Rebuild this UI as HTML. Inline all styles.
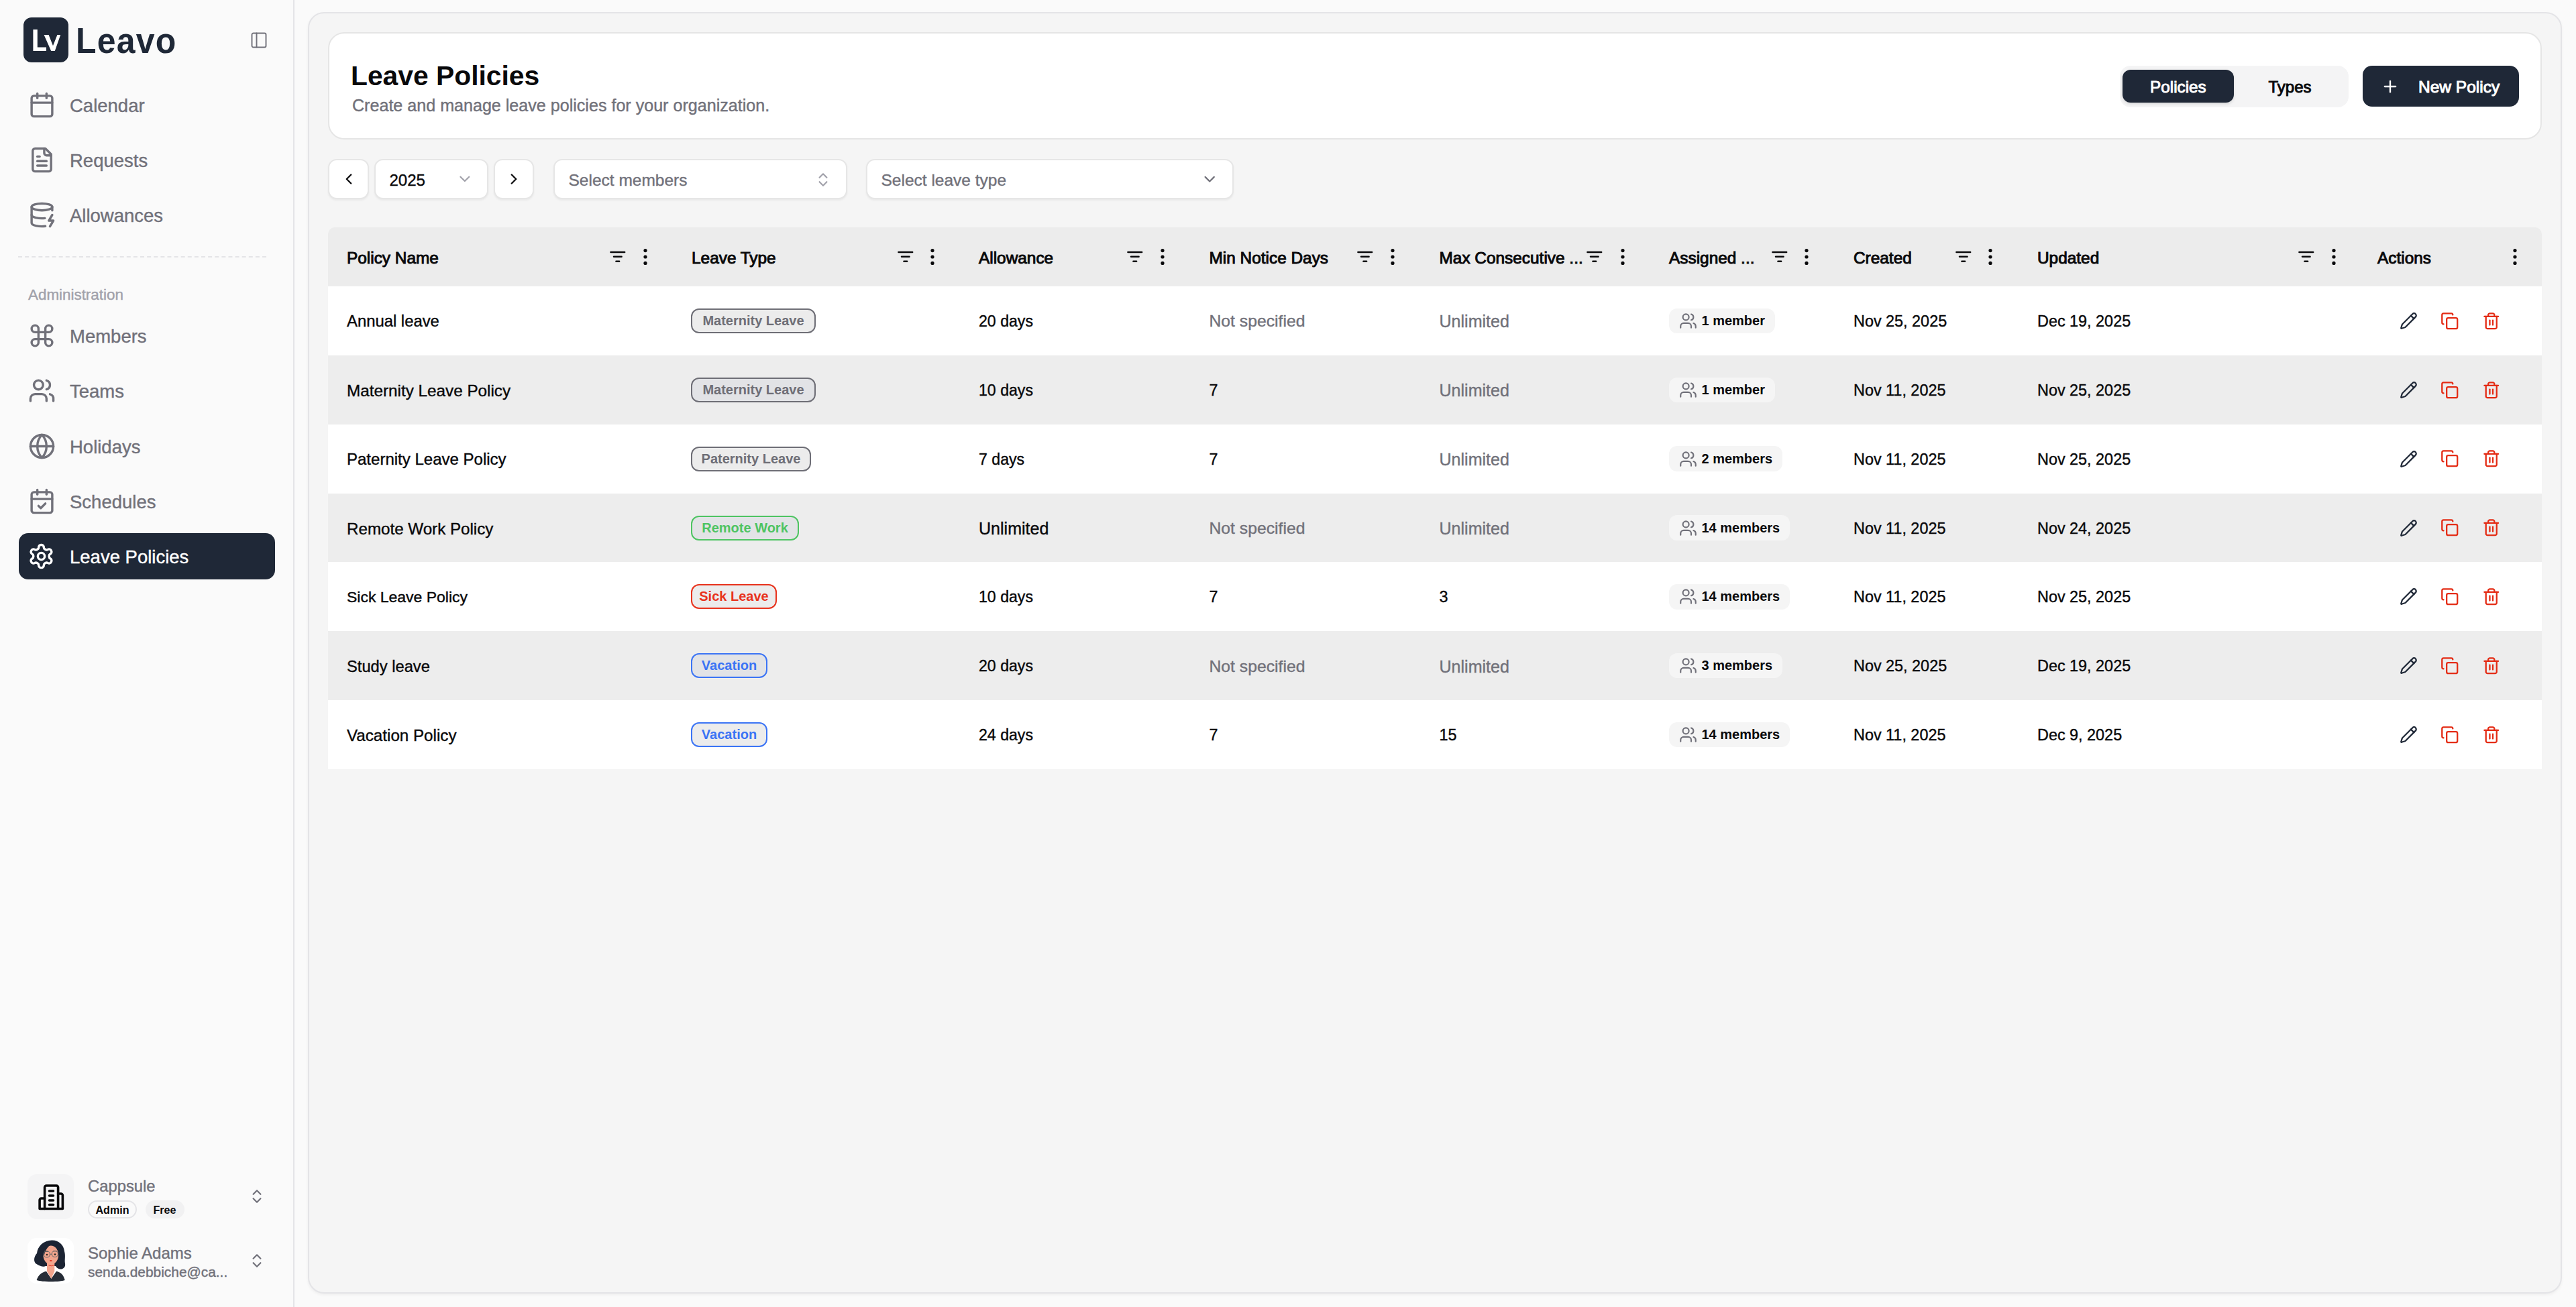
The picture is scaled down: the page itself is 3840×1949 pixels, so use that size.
<!DOCTYPE html>
<html><head><meta charset="utf-8"><title>Leave Policies</title>
<style>
html,body{margin:0;padding:0}
body{width:3840px;height:1949px;position:relative;overflow:hidden;background:#fafafa;font-family:"Liberation Sans",sans-serif}
.t{position:absolute;white-space:nowrap}
.i{position:absolute;overflow:visible}
.sidebar{position:absolute;left:0;top:0;width:437px;height:1949px;background:#fafafa;border-right:2px solid #e4e4e7}
.badge{position:absolute;height:37px;box-sizing:border-box;border:2px solid;border-radius:12px;font-size:20px;font-weight:700;line-height:33px;text-align:center;white-space:nowrap}
.pill{position:absolute;height:37.5px;box-sizing:border-box;padding:0 15px 0 15px;border-radius:12px;background:#f5f5f5;display:flex;align-items:center;white-space:nowrap}
.pill svg{flex:none;margin-right:6.5px}
.pill span{font-size:20px;font-weight:700;color:#09090b}
</style></head><body>
<div class="sidebar"></div>
<svg class="i" style="left:35px;top:26px" width="67" height="67" viewBox="0 0 67 67">
<rect x="0" y="0" width="67" height="67" rx="12" fill="#1f2837"/>
<path d="M14.4 18H20.8V44.6H34V50H14.4Z" fill="#fff"/>
<path d="M30.6 26H37.6L44 42.2L50.4 26H55.2L46.8 50H41.2Z" fill="#fff"/>
</svg>
<div class="t" style="left:113px;top:20.50px;font-size:50px;line-height:80px;color:#1f2837;font-weight:700;letter-spacing:1.2px;transform:scaleY(1.07);transform-origin:0 50%">Leavo</div>
<svg class="i" style="left:371.80px;top:45.70px" width="28" height="28" viewBox="0 0 24 24" fill="none" stroke="#71717a" stroke-width="1.65" stroke-linecap="round" stroke-linejoin="round"><rect width="18" height="18" x="3" y="3" rx="2"/><path d="M9 3v18"/></svg>
<svg class="i" style="left:41.50px;top:135.80px" width="41" height="41" viewBox="0 0 24 24" fill="none" stroke="#71717a" stroke-width="2" stroke-linecap="round" stroke-linejoin="round"><path d="M8 2v4"/><path d="M16 2v4"/><rect width="18" height="18" x="3" y="4" rx="2"/><path d="M3 10h18"/></svg>
<div class="t" style="left:104px;top:135.80px;font-size:27.5px;line-height:44px;color:#71717a;font-weight:400;-webkit-text-stroke:0.4px currentColor;">Calendar</div>
<svg class="i" style="left:41.50px;top:218.10px" width="41" height="41" viewBox="0 0 24 24" fill="none" stroke="#71717a" stroke-width="2" stroke-linecap="round" stroke-linejoin="round"><path d="M15 2H6a2 2 0 0 0-2 2v16a2 2 0 0 0 2 2h12a2 2 0 0 0 2-2V7Z"/><path d="M14 2v4a2 2 0 0 0 2 2h4"/><path d="M10 9H8"/><path d="M16 13H8"/><path d="M16 17H8"/></svg>
<div class="t" style="left:104px;top:218.10px;font-size:27.5px;line-height:44px;color:#71717a;font-weight:400;-webkit-text-stroke:0.4px currentColor;">Requests</div>
<svg class="i" style="left:41.50px;top:300.40px" width="41" height="41" viewBox="0 0 24 24" fill="none" stroke="#71717a" stroke-width="2" stroke-linecap="round" stroke-linejoin="round"><ellipse cx="12" cy="5" rx="9" ry="3"/><path d="M3 5V19A9 3 0 0 0 15 21.84"/><path d="M21 5V8"/><path d="M21 12L18 17H22L19 22"/><path d="M3 12A9 3 0 0 0 14.59 14.87"/></svg>
<div class="t" style="left:104px;top:300.40px;font-size:27.5px;line-height:44px;color:#71717a;font-weight:400;-webkit-text-stroke:0.4px currentColor;">Allowances</div>
<div style="position:absolute;left:27px;top:382px;width:370px;border-top:2px dashed #e4e4e7"></div>
<div class="t" style="left:42px;top:422.30px;font-size:22.4px;line-height:36px;color:#a1a1aa;font-weight:400;-webkit-text-stroke:0.4px currentColor;">Administration</div>
<svg class="i" style="left:41.50px;top:480.10px" width="41" height="41" viewBox="0 0 24 24" fill="none" stroke="#71717a" stroke-width="2" stroke-linecap="round" stroke-linejoin="round"><path d="M15 6v12a3 3 0 1 0 3-3H6a3 3 0 1 0 3 3V6a3 3 0 1 0-3 3h12a3 3 0 1 0-3-3"/></svg>
<div class="t" style="left:104px;top:480.10px;font-size:27.5px;line-height:44px;color:#71717a;font-weight:400;-webkit-text-stroke:0.4px currentColor;">Members</div>
<svg class="i" style="left:41.50px;top:562.40px" width="41" height="41" viewBox="0 0 24 24" fill="none" stroke="#71717a" stroke-width="2" stroke-linecap="round" stroke-linejoin="round"><path d="M16 21v-2a4 4 0 0 0-4-4H6a4 4 0 0 0-4 4v2"/><circle cx="9" cy="7" r="4"/><path d="M22 21v-2a4 4 0 0 0-3-3.87"/><path d="M16 3.13a4 4 0 0 1 0 7.75"/></svg>
<div class="t" style="left:104px;top:562.40px;font-size:27.5px;line-height:44px;color:#71717a;font-weight:400;-webkit-text-stroke:0.4px currentColor;">Teams</div>
<svg class="i" style="left:41.50px;top:644.70px" width="41" height="41" viewBox="0 0 24 24" fill="none" stroke="#71717a" stroke-width="2" stroke-linecap="round" stroke-linejoin="round"><circle cx="12" cy="12" r="10"/><path d="M12 2a14.5 14.5 0 0 0 0 20 14.5 14.5 0 0 0 0-20"/><path d="M2 12h20"/></svg>
<div class="t" style="left:104px;top:644.70px;font-size:27.5px;line-height:44px;color:#71717a;font-weight:400;-webkit-text-stroke:0.4px currentColor;">Holidays</div>
<svg class="i" style="left:41.50px;top:727.00px" width="41" height="41" viewBox="0 0 24 24" fill="none" stroke="#71717a" stroke-width="2" stroke-linecap="round" stroke-linejoin="round"><path d="M8 2v4"/><path d="M16 2v4"/><rect width="18" height="18" x="3" y="4" rx="2"/><path d="M3 10h18"/><path d="m9 16 2 2 4-4"/></svg>
<div class="t" style="left:104px;top:727.00px;font-size:27.5px;line-height:44px;color:#71717a;font-weight:400;-webkit-text-stroke:0.4px currentColor;">Schedules</div>
<div style="position:absolute;left:28px;top:795px;width:382px;height:69px;border-radius:14px;background:#1f2837"></div>
<svg class="i" style="left:41.20px;top:809.30px" width="41" height="41" viewBox="0 0 24 24" fill="none" stroke="#ffffff" stroke-width="2" stroke-linecap="round" stroke-linejoin="round"><path d="M12.22 2h-.44a2 2 0 0 0-2 2v.18a2 2 0 0 1-1 1.73l-.43.25a2 2 0 0 1-2 0l-.15-.08a2 2 0 0 0-2.73.73l-.22.38a2 2 0 0 0 .73 2.73l.15.1a2 2 0 0 1 1 1.72v.51a2 2 0 0 1-1 1.74l-.15.09a2 2 0 0 0-.73 2.730l.22.38a2 2 0 0 0 2.73.73l.15-.08a2 2 0 0 1 2 0l.43.25a2 2 0 0 1 1 1.73V20a2 2 0 0 0 2 2h.44a2 2 0 0 0 2-2v-.18a2 2 0 0 1 1-1.73l.43-.25a2 2 0 0 1 2 0l.15.08a2 2 0 0 0 2.73-.73l.22-.39a2 2 0 0 0-.73-2.73l-.15-.08a2 2 0 0 1-1-1.74v-.5a2 2 0 0 1 1-1.74l.15-.09a2 2 0 0 0 .73-2.73l-.22-.38a2 2 0 0 0-2.73-.73l-.15.08a2 2 0 0 1-2 0l-.43-.25a2 2 0 0 1-1-1.73V4a2 2 0 0 0-2-2z"/><circle cx="12" cy="12" r="3"/></svg>
<div class="t" style="left:104px;top:809.20px;font-size:27.5px;line-height:44px;color:#ffffff;font-weight:400;-webkit-text-stroke:0.4px currentColor;">Leave Policies</div>
<div style="position:absolute;left:41px;top:1751px;width:69px;height:67px;border-radius:14px;background:#f4f4f5"></div>
<svg class="i" style="left:56px;top:1765.5px" width="41" height="41" viewBox="0 0 41 41" fill="none" stroke="#09090b" stroke-width="3.6" stroke-linejoin="round" stroke-linecap="round">
<path d="M10.6 21H5.6a2.5 2.5 0 0 0-2.5 2.5V36.5H37.4V16.5a2.5 2.5 0 0 0-2.5-2.5H30.6"/>
<path d="M10.6 36.5V4.5a2.5 2.5 0 0 1 2.5-2.5h15a2.5 2.5 0 0 1 2.5 2.5V36.5"/>
<path d="M17.5 10h6M17.5 17h6M17.5 24h6M17.5 30.5h6"/>
</svg>
<div class="t" style="left:131px;top:1750.20px;font-size:23.8px;line-height:38px;color:#71717a;font-weight:400;-webkit-text-stroke:0.4px currentColor;">Cappsule</div>
<div style="position:absolute;left:131px;top:1790px;width:73px;height:26.5px;box-sizing:border-box;border:2px solid #e4e4e7;border-radius:14px;background:#fafafa"></div>
<div class="t" style="left:127.50px;width:80px;text-align:center;top:1791.20px;font-size:16.1px;line-height:26px;color:#09090b;font-weight:700;">Admin</div>
<div style="position:absolute;left:216.5px;top:1790px;width:58px;height:26.5px;border-radius:14px;background:#f1f1f2"></div>
<div class="t" style="left:215.50px;width:60px;text-align:center;top:1791.20px;font-size:16.1px;line-height:26px;color:#09090b;font-weight:700;">Free</div>
<svg class="i" style="left:369.50px;top:1771.30px" width="26" height="26" viewBox="0 0 24 24" fill="none" stroke="#71717a" stroke-width="2" stroke-linecap="round" stroke-linejoin="round"><path d="m7 15 5 5 5-5"/><path d="m7 9 5-5 5 5"/></svg>
<div style="position:absolute;left:41px;top:1846px;width:69px;height:67.5px;border-radius:14px;background:#ffffff"></div>
<svg class="i" style="left:41px;top:1846px" width="69" height="67.5" viewBox="0 0 69 67.5">
<path d="M12 38 C8 33 11 26 14 23 C15 12 24 4 36 3.5 C46 3 54 10 55 20 C57 27 55 33 56 38 C57 44 53 47 48 46.5 C45 46 43 44 42 42 L27 42 C24 44 18 42 12 38Z" fill="#1c2433"/>
<path d="M13.6 63 C16 55 22 51 28 49.8 L35.4 60.8 L43 49.8 C49 51 54 55 55.7 63 C48 66 22 66 13.6 63Z" fill="#262c36"/>
<path d="M29 37 h11.3 v12.8 l-4.9 11 l-6.4 -11z" fill="#f2a48c"/>
<ellipse cx="34.8" cy="25.5" rx="11.4" ry="14" fill="#f2a48c"/>
<path d="M22.5 24 C22 14 29 8.5 37 9 C32 11 27 16 24.5 27 Z" fill="#1c2433"/>
<path d="M45 12 C48 16 48 22 46.5 27 C46 20 44 15 40 11 Z" fill="#1c2433"/>
<circle cx="28.8" cy="24.4" r="4.6" fill="none" stroke="#6f6f6f" stroke-width="1.1"/>
<circle cx="40.9" cy="23.9" r="4.6" fill="none" stroke="#6f6f6f" stroke-width="1.1"/>
<path d="M33.4 24.2 h2.9" stroke="#6f6f6f" stroke-width="1.1"/>
<path d="M25 20 h6 M38 19.6 h6" stroke="#555" stroke-width="1.3"/>
<circle cx="29" cy="25" r="1.2" fill="#222"/><circle cx="41" cy="24.5" r="1.2" fill="#222"/>
<ellipse cx="34.8" cy="34" rx="2" ry="1.1" fill="#e0301e"/>
<path d="M31.5 40.6 Q35 42.8 39.8 40.6" stroke="#e0301e" stroke-width="1" fill="none"/>
</svg>
<div class="t" style="left:131px;top:1849.70px;font-size:24px;line-height:38px;color:#71717a;font-weight:400;-webkit-text-stroke:0.4px currentColor;">Sophie Adams</div>
<div class="t" style="left:131px;top:1879.90px;font-size:20.9px;line-height:33px;color:#71717a;font-weight:400;-webkit-text-stroke:0.4px currentColor;">senda.debbiche@ca...</div>
<svg class="i" style="left:369.50px;top:1867.30px" width="26" height="26" viewBox="0 0 24 24" fill="none" stroke="#71717a" stroke-width="2" stroke-linecap="round" stroke-linejoin="round"><path d="m7 15 5 5 5-5"/><path d="m7 9 5-5 5 5"/></svg>
<div style="position:absolute;left:459px;top:18px;width:3360px;height:1911px;box-sizing:border-box;border:2px solid #e4e4e7;border-radius:24px;background:#f5f5f5;box-shadow:0 2px 4px rgba(0,0,0,0.05)"></div>
<div style="position:absolute;left:489px;top:48px;width:3300px;height:160px;box-sizing:border-box;border:2px solid #e5e5e5;border-radius:24px;background:#fff"></div>
<div class="t" style="left:523px;top:80.80px;font-size:40.8px;line-height:65px;color:#09090b;font-weight:700;">Leave Policies</div>
<div class="t" style="left:525px;top:137.30px;font-size:25.1px;line-height:40px;color:#71717a;font-weight:400;-webkit-text-stroke:0.4px currentColor;">Create and manage leave policies for your organization.</div>
<div style="position:absolute;left:3159.5px;top:97.5px;width:341.5px;height:62px;border-radius:16px;background:#f4f4f5"></div>
<div style="position:absolute;left:3163.75px;top:103.75px;width:166.25px;height:49.5px;border-radius:12px;background:#1f2837;box-shadow:0 2px 4px rgba(0,0,0,0.12)"></div>
<div class="t" style="left:3146.90px;width:200px;text-align:center;top:110.25px;font-size:24.3px;line-height:39px;color:#fff;font-weight:400;-webkit-text-stroke:0.95px currentColor;">Policies</div>
<div class="t" style="left:3313.50px;width:200px;text-align:center;top:110.75px;font-size:24.0px;line-height:38px;color:#09090b;font-weight:400;-webkit-text-stroke:0.95px currentColor;">Types</div>
<div style="position:absolute;left:3522px;top:97.5px;width:232.5px;height:61.75px;border-radius:14px;background:#1f2837"></div>
<svg class="i" style="left:3549.10px;top:114.75px" width="28" height="28" viewBox="0 0 24 24" fill="none" stroke="#fff" stroke-width="2" stroke-linecap="round" stroke-linejoin="round"><path d="M5 12h14"/><path d="M12 5v14"/></svg>
<div class="t" style="left:3605px;top:110.25px;font-size:24.5px;line-height:39px;color:#fff;font-weight:400;-webkit-text-stroke:0.95px currentColor;">New Policy</div>
<div style="position:absolute;left:489.2px;top:236.9px;width:60.35px;height:60.30px;box-sizing:border-box;border:2px solid #e6e6e6;border-radius:13px;background:#fff;box-shadow:0 2px 3px rgba(0,0,0,0.05)"></div>
<svg class="i" style="left:506.60px;top:254.10px" width="26" height="26" viewBox="0 0 24 24" fill="none" stroke="#09090b" stroke-width="2.1" stroke-linecap="round" stroke-linejoin="round"><path d="m15 18-6-6 6-6"/></svg>
<div style="position:absolute;left:557.95px;top:236.9px;width:169.85px;height:60.30px;box-sizing:border-box;border:2px solid #e6e6e6;border-radius:13px;background:#fff;box-shadow:0 2px 3px rgba(0,0,0,0.05)"></div>
<div class="t" style="left:580.5px;top:249.50px;font-size:24px;line-height:38px;color:#09090b;font-weight:400;-webkit-text-stroke:0.4px currentColor;">2025</div>
<svg class="i" style="left:679.65px;top:254.15px" width="25.7" height="25.7" viewBox="0 0 24 24" fill="none" stroke="#a1a1aa" stroke-width="2" stroke-linecap="round" stroke-linejoin="round"><path d="m6 9 6 6 6-6"/></svg>
<div style="position:absolute;left:736.2px;top:236.9px;width:60.10px;height:60.30px;box-sizing:border-box;border:2px solid #e6e6e6;border-radius:13px;background:#fff;box-shadow:0 2px 3px rgba(0,0,0,0.05)"></div>
<svg class="i" style="left:753.30px;top:254.10px" width="26" height="26" viewBox="0 0 24 24" fill="none" stroke="#09090b" stroke-width="2.1" stroke-linecap="round" stroke-linejoin="round"><path d="m9 18 6-6-6-6"/></svg>
<div style="position:absolute;left:824.95px;top:236.9px;width:437.85px;height:60.30px;box-sizing:border-box;border:2px solid #e6e6e6;border-radius:13px;background:#fff;box-shadow:0 2px 3px rgba(0,0,0,0.05)"></div>
<div class="t" style="left:847.5px;top:249.00px;font-size:24.5px;line-height:39px;color:#71717a;font-weight:400;-webkit-text-stroke:0.4px currentColor;">Select members</div>
<svg class="i" style="left:1214.40px;top:254.50px" width="26" height="26" viewBox="0 0 24 24" fill="none" stroke="#a1a1aa" stroke-width="2" stroke-linecap="round" stroke-linejoin="round"><path d="m7 15 5 5 5-5"/><path d="m7 9 5-5 5 5"/></svg>
<div style="position:absolute;left:1290.7px;top:236.9px;width:548.10px;height:60.30px;box-sizing:border-box;border:2px solid #e6e6e6;border-radius:13px;background:#fff;box-shadow:0 2px 3px rgba(0,0,0,0.05)"></div>
<div class="t" style="left:1313.5px;top:249.00px;font-size:24.5px;line-height:39px;color:#71717a;font-weight:400;-webkit-text-stroke:0.4px currentColor;">Select leave type</div>
<svg class="i" style="left:1790.10px;top:254.30px" width="26.4" height="26.4" viewBox="0 0 24 24" fill="none" stroke="#71717a" stroke-width="2" stroke-linecap="round" stroke-linejoin="round"><path d="m6 9 6 6 6-6"/></svg>
<div style="position:absolute;left:489px;top:339.25px;width:3300px;height:87.75px;border-radius:10px 10px 0 0;background:#ececec"></div>
<div class="t" style="left:517px;top:364.62px;font-size:24.4px;line-height:39px;color:#09090b;font-weight:400;-webkit-text-stroke:0.95px currentColor;">Policy Name</div>
<svg class="i" style="left:906.70px;top:368.52px" width="27.6" height="27.6" viewBox="0 0 24 24" fill="none" stroke="#09090b" stroke-width="2.2" stroke-linecap="round" stroke-linejoin="round"><path d="M3 6h18"/><path d="M7 12h10"/><path d="M10 18h4"/></svg>
<svg class="i" style="left:957.7px;top:369.125px" width="8" height="28" viewBox="0 0 8 28"><circle cx="4" cy="4.6" r="2.6" fill="#09090b"/><circle cx="4" cy="14" r="2.6" fill="#09090b"/><circle cx="4" cy="23.4" r="2.6" fill="#09090b"/></svg>
<div class="t" style="left:1031px;top:364.62px;font-size:24.4px;line-height:39px;color:#09090b;font-weight:400;-webkit-text-stroke:0.95px currentColor;">Leave Type</div>
<svg class="i" style="left:1335.70px;top:368.52px" width="27.6" height="27.6" viewBox="0 0 24 24" fill="none" stroke="#09090b" stroke-width="2.2" stroke-linecap="round" stroke-linejoin="round"><path d="M3 6h18"/><path d="M7 12h10"/><path d="M10 18h4"/></svg>
<svg class="i" style="left:1386.2px;top:369.125px" width="8" height="28" viewBox="0 0 8 28"><circle cx="4" cy="4.6" r="2.6" fill="#09090b"/><circle cx="4" cy="14" r="2.6" fill="#09090b"/><circle cx="4" cy="23.4" r="2.6" fill="#09090b"/></svg>
<div class="t" style="left:1459px;top:364.62px;font-size:24.4px;line-height:39px;color:#09090b;font-weight:400;-webkit-text-stroke:0.95px currentColor;">Allowance</div>
<svg class="i" style="left:1677.70px;top:368.52px" width="27.6" height="27.6" viewBox="0 0 24 24" fill="none" stroke="#09090b" stroke-width="2.2" stroke-linecap="round" stroke-linejoin="round"><path d="M3 6h18"/><path d="M7 12h10"/><path d="M10 18h4"/></svg>
<svg class="i" style="left:1729px;top:369.125px" width="8" height="28" viewBox="0 0 8 28"><circle cx="4" cy="4.6" r="2.6" fill="#09090b"/><circle cx="4" cy="14" r="2.6" fill="#09090b"/><circle cx="4" cy="23.4" r="2.6" fill="#09090b"/></svg>
<div class="t" style="left:1802.5px;top:364.62px;font-size:24.4px;line-height:39px;color:#09090b;font-weight:400;-webkit-text-stroke:0.95px currentColor;">Min Notice Days</div>
<svg class="i" style="left:2020.70px;top:368.52px" width="27.6" height="27.6" viewBox="0 0 24 24" fill="none" stroke="#09090b" stroke-width="2.2" stroke-linecap="round" stroke-linejoin="round"><path d="M3 6h18"/><path d="M7 12h10"/><path d="M10 18h4"/></svg>
<svg class="i" style="left:2072.2px;top:369.125px" width="8" height="28" viewBox="0 0 8 28"><circle cx="4" cy="4.6" r="2.6" fill="#09090b"/><circle cx="4" cy="14" r="2.6" fill="#09090b"/><circle cx="4" cy="23.4" r="2.6" fill="#09090b"/></svg>
<div class="t" style="left:2145.5px;top:364.62px;font-size:24.4px;line-height:39px;color:#09090b;font-weight:400;-webkit-text-stroke:0.95px currentColor;">Max Consecutive ...</div>
<svg class="i" style="left:2363.20px;top:368.52px" width="27.6" height="27.6" viewBox="0 0 24 24" fill="none" stroke="#09090b" stroke-width="2.2" stroke-linecap="round" stroke-linejoin="round"><path d="M3 6h18"/><path d="M7 12h10"/><path d="M10 18h4"/></svg>
<svg class="i" style="left:2414.9px;top:369.125px" width="8" height="28" viewBox="0 0 8 28"><circle cx="4" cy="4.6" r="2.6" fill="#09090b"/><circle cx="4" cy="14" r="2.6" fill="#09090b"/><circle cx="4" cy="23.4" r="2.6" fill="#09090b"/></svg>
<div class="t" style="left:2488px;top:364.62px;font-size:24.4px;line-height:39px;color:#09090b;font-weight:400;-webkit-text-stroke:0.95px currentColor;">Assigned ...</div>
<svg class="i" style="left:2638.70px;top:368.52px" width="27.6" height="27.6" viewBox="0 0 24 24" fill="none" stroke="#09090b" stroke-width="2.2" stroke-linecap="round" stroke-linejoin="round"><path d="M3 6h18"/><path d="M7 12h10"/><path d="M10 18h4"/></svg>
<svg class="i" style="left:2688.8px;top:369.125px" width="8" height="28" viewBox="0 0 8 28"><circle cx="4" cy="4.6" r="2.6" fill="#09090b"/><circle cx="4" cy="14" r="2.6" fill="#09090b"/><circle cx="4" cy="23.4" r="2.6" fill="#09090b"/></svg>
<div class="t" style="left:2763px;top:364.62px;font-size:24.4px;line-height:39px;color:#09090b;font-weight:400;-webkit-text-stroke:0.95px currentColor;">Created</div>
<svg class="i" style="left:2912.70px;top:368.52px" width="27.6" height="27.6" viewBox="0 0 24 24" fill="none" stroke="#09090b" stroke-width="2.2" stroke-linecap="round" stroke-linejoin="round"><path d="M3 6h18"/><path d="M7 12h10"/><path d="M10 18h4"/></svg>
<svg class="i" style="left:2963px;top:369.125px" width="8" height="28" viewBox="0 0 8 28"><circle cx="4" cy="4.6" r="2.6" fill="#09090b"/><circle cx="4" cy="14" r="2.6" fill="#09090b"/><circle cx="4" cy="23.4" r="2.6" fill="#09090b"/></svg>
<div class="t" style="left:3037px;top:364.62px;font-size:24.4px;line-height:39px;color:#09090b;font-weight:400;-webkit-text-stroke:0.95px currentColor;">Updated</div>
<svg class="i" style="left:3423.70px;top:368.52px" width="27.6" height="27.6" viewBox="0 0 24 24" fill="none" stroke="#09090b" stroke-width="2.2" stroke-linecap="round" stroke-linejoin="round"><path d="M3 6h18"/><path d="M7 12h10"/><path d="M10 18h4"/></svg>
<svg class="i" style="left:3474.9px;top:369.125px" width="8" height="28" viewBox="0 0 8 28"><circle cx="4" cy="4.6" r="2.6" fill="#09090b"/><circle cx="4" cy="14" r="2.6" fill="#09090b"/><circle cx="4" cy="23.4" r="2.6" fill="#09090b"/></svg>
<div class="t" style="left:3544px;top:364.62px;font-size:24.4px;line-height:39px;color:#09090b;font-weight:400;-webkit-text-stroke:0.95px currentColor;">Actions</div>
<svg class="i" style="left:3745px;top:369.125px" width="8" height="28" viewBox="0 0 8 28"><circle cx="4" cy="4.6" r="2.6" fill="#09090b"/><circle cx="4" cy="14" r="2.6" fill="#09090b"/><circle cx="4" cy="23.4" r="2.6" fill="#09090b"/></svg>
<div style="position:absolute;left:489px;top:427.00px;width:3300px;height:103.16px;background:#ffffff"></div>
<div class="t" style="left:517px;top:460.43px;font-size:23.85px;line-height:38px;color:#09090b;font-weight:400;-webkit-text-stroke:0.4px currentColor;">Annual leave</div>
<div class="badge" style="left:1030px;top:459.93px;width:186px;border-color:#6e6e76;color:#6e6e76;background:#ececec">Maternity Leave</div>
<div class="t" style="left:1459px;top:460.93px;font-size:23.13px;line-height:37px;color:#09090b;font-weight:400;-webkit-text-stroke:0.4px currentColor;">20 days</div>
<div class="t" style="left:1802.5px;top:459.43px;font-size:24.74px;line-height:40px;color:#71717a;font-weight:400;-webkit-text-stroke:0.4px currentColor;">Not specified</div>
<div class="t" style="left:2145.5px;top:459.43px;font-size:25.07px;line-height:40px;color:#71717a;font-weight:400;-webkit-text-stroke:0.4px currentColor;">Unlimited</div>
<div class="pill" style="left:2488px;top:459.68px"><svg width="27" height="27" viewBox="0 0 24 24" fill="none" stroke="#71717a" stroke-width="1.9" stroke-linecap="round" stroke-linejoin="round"><path d="M16 21v-2a4 4 0 0 0-4-4H6a4 4 0 0 0-4 4v2"/><circle cx="9" cy="7" r="4"/><path d="M22 21v-2a4 4 0 0 0-3-3.87"/><path d="M16 3.13a4 4 0 0 1 0 7.75"/></svg><span>1 member</span></div>
<div class="t" style="left:2763px;top:460.93px;font-size:23.4px;line-height:37px;color:#09090b;font-weight:400;-webkit-text-stroke:0.4px currentColor;">Nov 25, 2025</div>
<div class="t" style="left:3037px;top:460.93px;font-size:23.4px;line-height:37px;color:#09090b;font-weight:400;-webkit-text-stroke:0.4px currentColor;">Dec 19, 2025</div>
<svg class="i" style="left:3577.00px;top:464.93px" width="27" height="27" viewBox="0 0 24 24" fill="none" stroke="#1f2837" stroke-width="2" stroke-linecap="round" stroke-linejoin="round"><path d="M21.174 6.812a1 1 0 0 0-3.986-3.987L3.842 16.174a2 2 0 0 0-.5.83l-1.321 4.352a.5.5 0 0 0 .623.622l4.353-1.32a2 2 0 0 0 .83-.497z"/><path d="m15 5 4 4"/></svg>
<svg class="i" style="left:3638.45px;top:464.68px" width="27.5" height="27.5" viewBox="0 0 24 24" fill="none" stroke="#e42b14" stroke-width="2" stroke-linecap="round" stroke-linejoin="round"><rect width="14" height="14" x="8" y="8" rx="2" ry="2"/><path d="M4 16c-1.1 0-2-.9-2-2V4c0-1.1.9-2 2-2h10c1.1 0 2 .9 2 2"/></svg>
<svg class="i" style="left:3700.25px;top:464.68px" width="27.5" height="27.5" viewBox="0 0 24 24" fill="none" stroke="#e42b14" stroke-width="2" stroke-linecap="round" stroke-linejoin="round"><path d="M3 6h18"/><path d="M19 6v14c0 1-1 2-2 2H7c-1 0-2-1-2-2V6"/><path d="M8 6V4c0-1 1-2 2-2h4c1 0 2 1 2 2v2"/><line x1="10" x2="10" y1="11" y2="17"/><line x1="14" x2="14" y1="11" y2="17"/></svg>
<div style="position:absolute;left:489px;top:529.86px;width:3300px;height:103.16px;background:#ededed"></div>
<div class="t" style="left:517px;top:562.79px;font-size:24.28px;line-height:39px;color:#09090b;font-weight:400;-webkit-text-stroke:0.4px currentColor;">Maternity Leave Policy</div>
<div class="badge" style="left:1030px;top:562.79px;width:186px;border-color:#6e6e76;color:#6e6e76;background:#e2e3e6">Maternity Leave</div>
<div class="t" style="left:1459px;top:563.79px;font-size:23.13px;line-height:37px;color:#09090b;font-weight:400;-webkit-text-stroke:0.4px currentColor;">10 days</div>
<div class="t" style="left:1802.5px;top:563.79px;font-size:23.4px;line-height:37px;color:#09090b;font-weight:400;-webkit-text-stroke:0.4px currentColor;">7</div>
<div class="t" style="left:2145.5px;top:562.29px;font-size:25.07px;line-height:40px;color:#71717a;font-weight:400;-webkit-text-stroke:0.4px currentColor;">Unlimited</div>
<div class="pill" style="left:2488px;top:562.54px"><svg width="27" height="27" viewBox="0 0 24 24" fill="none" stroke="#71717a" stroke-width="1.9" stroke-linecap="round" stroke-linejoin="round"><path d="M16 21v-2a4 4 0 0 0-4-4H6a4 4 0 0 0-4 4v2"/><circle cx="9" cy="7" r="4"/><path d="M22 21v-2a4 4 0 0 0-3-3.87"/><path d="M16 3.13a4 4 0 0 1 0 7.75"/></svg><span>1 member</span></div>
<div class="t" style="left:2763px;top:563.79px;font-size:23.4px;line-height:37px;color:#09090b;font-weight:400;-webkit-text-stroke:0.4px currentColor;">Nov 11, 2025</div>
<div class="t" style="left:3037px;top:563.79px;font-size:23.4px;line-height:37px;color:#09090b;font-weight:400;-webkit-text-stroke:0.4px currentColor;">Nov 25, 2025</div>
<svg class="i" style="left:3577.00px;top:567.79px" width="27" height="27" viewBox="0 0 24 24" fill="none" stroke="#1f2837" stroke-width="2" stroke-linecap="round" stroke-linejoin="round"><path d="M21.174 6.812a1 1 0 0 0-3.986-3.987L3.842 16.174a2 2 0 0 0-.5.83l-1.321 4.352a.5.5 0 0 0 .623.622l4.353-1.32a2 2 0 0 0 .83-.497z"/><path d="m15 5 4 4"/></svg>
<svg class="i" style="left:3638.45px;top:567.54px" width="27.5" height="27.5" viewBox="0 0 24 24" fill="none" stroke="#e42b14" stroke-width="2" stroke-linecap="round" stroke-linejoin="round"><rect width="14" height="14" x="8" y="8" rx="2" ry="2"/><path d="M4 16c-1.1 0-2-.9-2-2V4c0-1.1.9-2 2-2h10c1.1 0 2 .9 2 2"/></svg>
<svg class="i" style="left:3700.25px;top:567.54px" width="27.5" height="27.5" viewBox="0 0 24 24" fill="none" stroke="#e42b14" stroke-width="2" stroke-linecap="round" stroke-linejoin="round"><path d="M3 6h18"/><path d="M19 6v14c0 1-1 2-2 2H7c-1 0-2-1-2-2V6"/><path d="M8 6V4c0-1 1-2 2-2h4c1 0 2 1 2 2v2"/><line x1="10" x2="10" y1="11" y2="17"/><line x1="14" x2="14" y1="11" y2="17"/></svg>
<div style="position:absolute;left:489px;top:632.71px;width:3300px;height:103.16px;background:#ffffff"></div>
<div class="t" style="left:517px;top:666.14px;font-size:24.03px;line-height:38px;color:#09090b;font-weight:400;-webkit-text-stroke:0.4px currentColor;">Paternity Leave Policy</div>
<div class="badge" style="left:1030px;top:665.64px;width:179px;border-color:#6e6e76;color:#6e6e76;background:#ececec">Paternity Leave</div>
<div class="t" style="left:1459px;top:666.64px;font-size:23.13px;line-height:37px;color:#09090b;font-weight:400;-webkit-text-stroke:0.4px currentColor;">7 days</div>
<div class="t" style="left:1802.5px;top:666.64px;font-size:23.4px;line-height:37px;color:#09090b;font-weight:400;-webkit-text-stroke:0.4px currentColor;">7</div>
<div class="t" style="left:2145.5px;top:665.14px;font-size:25.07px;line-height:40px;color:#71717a;font-weight:400;-webkit-text-stroke:0.4px currentColor;">Unlimited</div>
<div class="pill" style="left:2488px;top:665.39px"><svg width="27" height="27" viewBox="0 0 24 24" fill="none" stroke="#71717a" stroke-width="1.9" stroke-linecap="round" stroke-linejoin="round"><path d="M16 21v-2a4 4 0 0 0-4-4H6a4 4 0 0 0-4 4v2"/><circle cx="9" cy="7" r="4"/><path d="M22 21v-2a4 4 0 0 0-3-3.87"/><path d="M16 3.13a4 4 0 0 1 0 7.75"/></svg><span>2 members</span></div>
<div class="t" style="left:2763px;top:666.64px;font-size:23.4px;line-height:37px;color:#09090b;font-weight:400;-webkit-text-stroke:0.4px currentColor;">Nov 11, 2025</div>
<div class="t" style="left:3037px;top:666.64px;font-size:23.4px;line-height:37px;color:#09090b;font-weight:400;-webkit-text-stroke:0.4px currentColor;">Nov 25, 2025</div>
<svg class="i" style="left:3577.00px;top:670.64px" width="27" height="27" viewBox="0 0 24 24" fill="none" stroke="#1f2837" stroke-width="2" stroke-linecap="round" stroke-linejoin="round"><path d="M21.174 6.812a1 1 0 0 0-3.986-3.987L3.842 16.174a2 2 0 0 0-.5.83l-1.321 4.352a.5.5 0 0 0 .623.622l4.353-1.32a2 2 0 0 0 .83-.497z"/><path d="m15 5 4 4"/></svg>
<svg class="i" style="left:3638.45px;top:670.39px" width="27.5" height="27.5" viewBox="0 0 24 24" fill="none" stroke="#e42b14" stroke-width="2" stroke-linecap="round" stroke-linejoin="round"><rect width="14" height="14" x="8" y="8" rx="2" ry="2"/><path d="M4 16c-1.1 0-2-.9-2-2V4c0-1.1.9-2 2-2h10c1.1 0 2 .9 2 2"/></svg>
<svg class="i" style="left:3700.25px;top:670.39px" width="27.5" height="27.5" viewBox="0 0 24 24" fill="none" stroke="#e42b14" stroke-width="2" stroke-linecap="round" stroke-linejoin="round"><path d="M3 6h18"/><path d="M19 6v14c0 1-1 2-2 2H7c-1 0-2-1-2-2V6"/><path d="M8 6V4c0-1 1-2 2-2h4c1 0 2 1 2 2v2"/><line x1="10" x2="10" y1="11" y2="17"/><line x1="14" x2="14" y1="11" y2="17"/></svg>
<div style="position:absolute;left:489px;top:735.57px;width:3300px;height:103.16px;background:#ededed"></div>
<div class="t" style="left:517px;top:768.50px;font-size:24.17px;line-height:39px;color:#09090b;font-weight:400;-webkit-text-stroke:0.4px currentColor;">Remote Work Policy</div>
<div class="badge" style="left:1030px;top:768.50px;width:161px;border-color:#4ec462;color:#4ec462;background:#e2e3e6">Remote Work</div>
<div class="t" style="left:1459px;top:768.00px;font-size:25.07px;line-height:40px;color:#09090b;font-weight:400;-webkit-text-stroke:0.4px currentColor;">Unlimited</div>
<div class="t" style="left:1802.5px;top:768.00px;font-size:24.74px;line-height:40px;color:#71717a;font-weight:400;-webkit-text-stroke:0.4px currentColor;">Not specified</div>
<div class="t" style="left:2145.5px;top:768.00px;font-size:25.07px;line-height:40px;color:#71717a;font-weight:400;-webkit-text-stroke:0.4px currentColor;">Unlimited</div>
<div class="pill" style="left:2488px;top:768.25px"><svg width="27" height="27" viewBox="0 0 24 24" fill="none" stroke="#71717a" stroke-width="1.9" stroke-linecap="round" stroke-linejoin="round"><path d="M16 21v-2a4 4 0 0 0-4-4H6a4 4 0 0 0-4 4v2"/><circle cx="9" cy="7" r="4"/><path d="M22 21v-2a4 4 0 0 0-3-3.87"/><path d="M16 3.13a4 4 0 0 1 0 7.75"/></svg><span>14 members</span></div>
<div class="t" style="left:2763px;top:769.50px;font-size:23.4px;line-height:37px;color:#09090b;font-weight:400;-webkit-text-stroke:0.4px currentColor;">Nov 11, 2025</div>
<div class="t" style="left:3037px;top:769.50px;font-size:23.4px;line-height:37px;color:#09090b;font-weight:400;-webkit-text-stroke:0.4px currentColor;">Nov 24, 2025</div>
<svg class="i" style="left:3577.00px;top:773.50px" width="27" height="27" viewBox="0 0 24 24" fill="none" stroke="#1f2837" stroke-width="2" stroke-linecap="round" stroke-linejoin="round"><path d="M21.174 6.812a1 1 0 0 0-3.986-3.987L3.842 16.174a2 2 0 0 0-.5.83l-1.321 4.352a.5.5 0 0 0 .623.622l4.353-1.32a2 2 0 0 0 .83-.497z"/><path d="m15 5 4 4"/></svg>
<svg class="i" style="left:3638.45px;top:773.25px" width="27.5" height="27.5" viewBox="0 0 24 24" fill="none" stroke="#e42b14" stroke-width="2" stroke-linecap="round" stroke-linejoin="round"><rect width="14" height="14" x="8" y="8" rx="2" ry="2"/><path d="M4 16c-1.1 0-2-.9-2-2V4c0-1.1.9-2 2-2h10c1.1 0 2 .9 2 2"/></svg>
<svg class="i" style="left:3700.25px;top:773.25px" width="27.5" height="27.5" viewBox="0 0 24 24" fill="none" stroke="#e42b14" stroke-width="2" stroke-linecap="round" stroke-linejoin="round"><path d="M3 6h18"/><path d="M19 6v14c0 1-1 2-2 2H7c-1 0-2-1-2-2V6"/><path d="M8 6V4c0-1 1-2 2-2h4c1 0 2 1 2 2v2"/><line x1="10" x2="10" y1="11" y2="17"/><line x1="14" x2="14" y1="11" y2="17"/></svg>
<div style="position:absolute;left:489px;top:838.43px;width:3300px;height:103.16px;background:#ffffff"></div>
<div class="t" style="left:517px;top:872.36px;font-size:22.97px;line-height:37px;color:#09090b;font-weight:400;-webkit-text-stroke:0.4px currentColor;">Sick Leave Policy</div>
<div class="badge" style="left:1030px;top:871.36px;width:128px;border-color:#e8321c;color:#e8321c;background:#ececec">Sick Leave</div>
<div class="t" style="left:1459px;top:872.36px;font-size:23.13px;line-height:37px;color:#09090b;font-weight:400;-webkit-text-stroke:0.4px currentColor;">10 days</div>
<div class="t" style="left:1802.5px;top:872.36px;font-size:23.4px;line-height:37px;color:#09090b;font-weight:400;-webkit-text-stroke:0.4px currentColor;">7</div>
<div class="t" style="left:2145.5px;top:872.36px;font-size:23.4px;line-height:37px;color:#09090b;font-weight:400;-webkit-text-stroke:0.4px currentColor;">3</div>
<div class="pill" style="left:2488px;top:871.11px"><svg width="27" height="27" viewBox="0 0 24 24" fill="none" stroke="#71717a" stroke-width="1.9" stroke-linecap="round" stroke-linejoin="round"><path d="M16 21v-2a4 4 0 0 0-4-4H6a4 4 0 0 0-4 4v2"/><circle cx="9" cy="7" r="4"/><path d="M22 21v-2a4 4 0 0 0-3-3.87"/><path d="M16 3.13a4 4 0 0 1 0 7.75"/></svg><span>14 members</span></div>
<div class="t" style="left:2763px;top:872.36px;font-size:23.4px;line-height:37px;color:#09090b;font-weight:400;-webkit-text-stroke:0.4px currentColor;">Nov 11, 2025</div>
<div class="t" style="left:3037px;top:872.36px;font-size:23.4px;line-height:37px;color:#09090b;font-weight:400;-webkit-text-stroke:0.4px currentColor;">Nov 25, 2025</div>
<svg class="i" style="left:3577.00px;top:876.36px" width="27" height="27" viewBox="0 0 24 24" fill="none" stroke="#1f2837" stroke-width="2" stroke-linecap="round" stroke-linejoin="round"><path d="M21.174 6.812a1 1 0 0 0-3.986-3.987L3.842 16.174a2 2 0 0 0-.5.83l-1.321 4.352a.5.5 0 0 0 .623.622l4.353-1.32a2 2 0 0 0 .83-.497z"/><path d="m15 5 4 4"/></svg>
<svg class="i" style="left:3638.45px;top:876.11px" width="27.5" height="27.5" viewBox="0 0 24 24" fill="none" stroke="#e42b14" stroke-width="2" stroke-linecap="round" stroke-linejoin="round"><rect width="14" height="14" x="8" y="8" rx="2" ry="2"/><path d="M4 16c-1.1 0-2-.9-2-2V4c0-1.1.9-2 2-2h10c1.1 0 2 .9 2 2"/></svg>
<svg class="i" style="left:3700.25px;top:876.11px" width="27.5" height="27.5" viewBox="0 0 24 24" fill="none" stroke="#e42b14" stroke-width="2" stroke-linecap="round" stroke-linejoin="round"><path d="M3 6h18"/><path d="M19 6v14c0 1-1 2-2 2H7c-1 0-2-1-2-2V6"/><path d="M8 6V4c0-1 1-2 2-2h4c1 0 2 1 2 2v2"/><line x1="10" x2="10" y1="11" y2="17"/><line x1="14" x2="14" y1="11" y2="17"/></svg>
<div style="position:absolute;left:489px;top:941.28px;width:3300px;height:103.16px;background:#ededed"></div>
<div class="t" style="left:517px;top:974.71px;font-size:23.71px;line-height:38px;color:#09090b;font-weight:400;-webkit-text-stroke:0.4px currentColor;">Study leave</div>
<div class="badge" style="left:1030px;top:974.21px;width:114px;border-color:#3b74f5;color:#3b74f5;background:#e2e3e6">Vacation</div>
<div class="t" style="left:1459px;top:975.21px;font-size:23.13px;line-height:37px;color:#09090b;font-weight:400;-webkit-text-stroke:0.4px currentColor;">20 days</div>
<div class="t" style="left:1802.5px;top:973.71px;font-size:24.74px;line-height:40px;color:#71717a;font-weight:400;-webkit-text-stroke:0.4px currentColor;">Not specified</div>
<div class="t" style="left:2145.5px;top:973.71px;font-size:25.07px;line-height:40px;color:#71717a;font-weight:400;-webkit-text-stroke:0.4px currentColor;">Unlimited</div>
<div class="pill" style="left:2488px;top:973.96px"><svg width="27" height="27" viewBox="0 0 24 24" fill="none" stroke="#71717a" stroke-width="1.9" stroke-linecap="round" stroke-linejoin="round"><path d="M16 21v-2a4 4 0 0 0-4-4H6a4 4 0 0 0-4 4v2"/><circle cx="9" cy="7" r="4"/><path d="M22 21v-2a4 4 0 0 0-3-3.87"/><path d="M16 3.13a4 4 0 0 1 0 7.75"/></svg><span>3 members</span></div>
<div class="t" style="left:2763px;top:975.21px;font-size:23.4px;line-height:37px;color:#09090b;font-weight:400;-webkit-text-stroke:0.4px currentColor;">Nov 25, 2025</div>
<div class="t" style="left:3037px;top:975.21px;font-size:23.4px;line-height:37px;color:#09090b;font-weight:400;-webkit-text-stroke:0.4px currentColor;">Dec 19, 2025</div>
<svg class="i" style="left:3577.00px;top:979.21px" width="27" height="27" viewBox="0 0 24 24" fill="none" stroke="#1f2837" stroke-width="2" stroke-linecap="round" stroke-linejoin="round"><path d="M21.174 6.812a1 1 0 0 0-3.986-3.987L3.842 16.174a2 2 0 0 0-.5.83l-1.321 4.352a.5.5 0 0 0 .623.622l4.353-1.32a2 2 0 0 0 .83-.497z"/><path d="m15 5 4 4"/></svg>
<svg class="i" style="left:3638.45px;top:978.96px" width="27.5" height="27.5" viewBox="0 0 24 24" fill="none" stroke="#e42b14" stroke-width="2" stroke-linecap="round" stroke-linejoin="round"><rect width="14" height="14" x="8" y="8" rx="2" ry="2"/><path d="M4 16c-1.1 0-2-.9-2-2V4c0-1.1.9-2 2-2h10c1.1 0 2 .9 2 2"/></svg>
<svg class="i" style="left:3700.25px;top:978.96px" width="27.5" height="27.5" viewBox="0 0 24 24" fill="none" stroke="#e42b14" stroke-width="2" stroke-linecap="round" stroke-linejoin="round"><path d="M3 6h18"/><path d="M19 6v14c0 1-1 2-2 2H7c-1 0-2-1-2-2V6"/><path d="M8 6V4c0-1 1-2 2-2h4c1 0 2 1 2 2v2"/><line x1="10" x2="10" y1="11" y2="17"/><line x1="14" x2="14" y1="11" y2="17"/></svg>
<div style="position:absolute;left:489px;top:1044.14px;width:3300px;height:103.16px;background:#ffffff"></div>
<div class="t" style="left:517px;top:1077.07px;font-size:24.18px;line-height:39px;color:#09090b;font-weight:400;-webkit-text-stroke:0.4px currentColor;">Vacation Policy</div>
<div class="badge" style="left:1030px;top:1077.07px;width:114px;border-color:#3b74f5;color:#3b74f5;background:#ececec">Vacation</div>
<div class="t" style="left:1459px;top:1078.07px;font-size:23.13px;line-height:37px;color:#09090b;font-weight:400;-webkit-text-stroke:0.4px currentColor;">24 days</div>
<div class="t" style="left:1802.5px;top:1078.07px;font-size:23.4px;line-height:37px;color:#09090b;font-weight:400;-webkit-text-stroke:0.4px currentColor;">7</div>
<div class="t" style="left:2145.5px;top:1078.07px;font-size:23.4px;line-height:37px;color:#09090b;font-weight:400;-webkit-text-stroke:0.4px currentColor;">15</div>
<div class="pill" style="left:2488px;top:1076.82px"><svg width="27" height="27" viewBox="0 0 24 24" fill="none" stroke="#71717a" stroke-width="1.9" stroke-linecap="round" stroke-linejoin="round"><path d="M16 21v-2a4 4 0 0 0-4-4H6a4 4 0 0 0-4 4v2"/><circle cx="9" cy="7" r="4"/><path d="M22 21v-2a4 4 0 0 0-3-3.87"/><path d="M16 3.13a4 4 0 0 1 0 7.75"/></svg><span>14 members</span></div>
<div class="t" style="left:2763px;top:1078.07px;font-size:23.4px;line-height:37px;color:#09090b;font-weight:400;-webkit-text-stroke:0.4px currentColor;">Nov 11, 2025</div>
<div class="t" style="left:3037px;top:1078.07px;font-size:23.4px;line-height:37px;color:#09090b;font-weight:400;-webkit-text-stroke:0.4px currentColor;">Dec 9, 2025</div>
<svg class="i" style="left:3577.00px;top:1082.07px" width="27" height="27" viewBox="0 0 24 24" fill="none" stroke="#1f2837" stroke-width="2" stroke-linecap="round" stroke-linejoin="round"><path d="M21.174 6.812a1 1 0 0 0-3.986-3.987L3.842 16.174a2 2 0 0 0-.5.83l-1.321 4.352a.5.5 0 0 0 .623.622l4.353-1.32a2 2 0 0 0 .83-.497z"/><path d="m15 5 4 4"/></svg>
<svg class="i" style="left:3638.45px;top:1081.82px" width="27.5" height="27.5" viewBox="0 0 24 24" fill="none" stroke="#e42b14" stroke-width="2" stroke-linecap="round" stroke-linejoin="round"><rect width="14" height="14" x="8" y="8" rx="2" ry="2"/><path d="M4 16c-1.1 0-2-.9-2-2V4c0-1.1.9-2 2-2h10c1.1 0 2 .9 2 2"/></svg>
<svg class="i" style="left:3700.25px;top:1081.82px" width="27.5" height="27.5" viewBox="0 0 24 24" fill="none" stroke="#e42b14" stroke-width="2" stroke-linecap="round" stroke-linejoin="round"><path d="M3 6h18"/><path d="M19 6v14c0 1-1 2-2 2H7c-1 0-2-1-2-2V6"/><path d="M8 6V4c0-1 1-2 2-2h4c1 0 2 1 2 2v2"/><line x1="10" x2="10" y1="11" y2="17"/><line x1="14" x2="14" y1="11" y2="17"/></svg>
</body></html>
